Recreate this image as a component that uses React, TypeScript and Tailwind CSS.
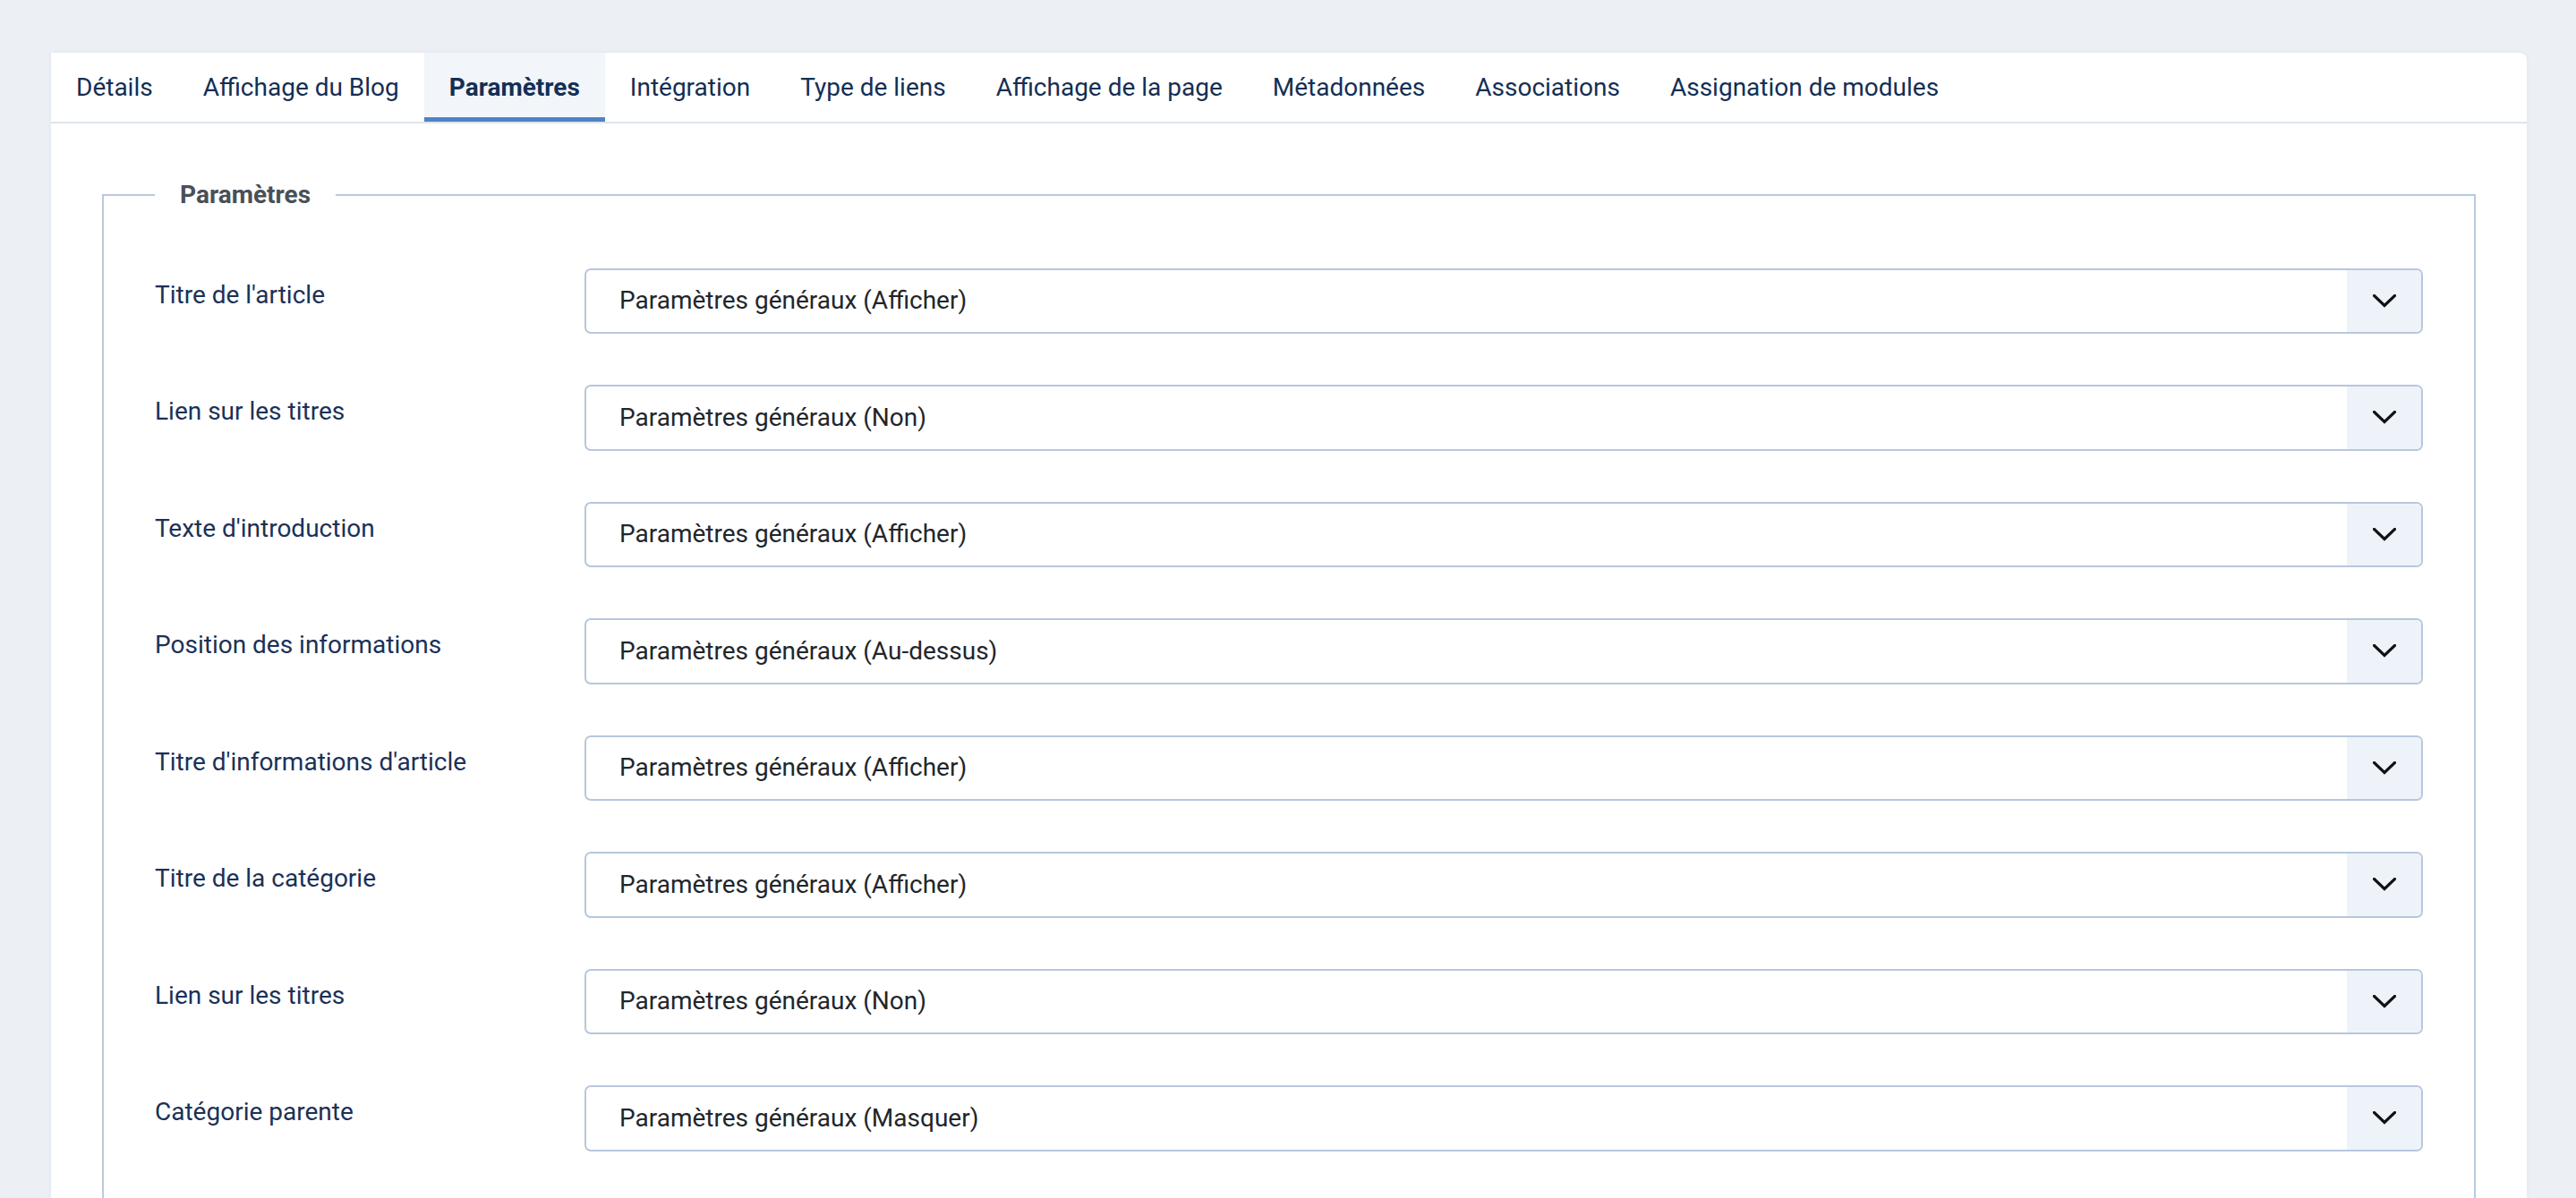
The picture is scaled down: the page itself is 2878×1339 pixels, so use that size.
const tabs = [
  "Détails",
  "Affichage du Blog",
  "Paramètres",
  "Intégration",
  "Type de liens",
  "Affichage de la page",
  "Métadonnées",
  "Associations",
  "Assignation de modules",
];

const rows = [
  { label: "Titre de l'article", value: "Paramètres généraux (Afficher)" },
  { label: "Lien sur les titres", value: "Paramètres généraux (Non)" },
  { label: "Texte d'introduction", value: "Paramètres généraux (Afficher)" },
  { label: "Position des informations", value: "Paramètres généraux (Au-dessus)" },
  { label: "Titre d'informations d'article", value: "Paramètres généraux (Afficher)" },
  { label: "Titre de la catégorie", value: "Paramètres généraux (Afficher)" },
  { label: "Lien sur les titres", value: "Paramètres généraux (Non)" },
  { label: "Catégorie parente", value: "Paramètres généraux (Masquer)" },
];

function Chevron() {
  return (
    <svg width="26" height="15" viewBox="0 0 26 15" fill="none">
      <polyline
        points="1.5,1.5 13,12.5 24.5,1.5"
        stroke="#111"
        strokeWidth="3.2"
        strokeLinecap="square"
      />
    </svg>
  );
}

function SelectBox({ value }: { value: string }) {
  return (
    <div className="flex h-[73.5px] flex-1 items-stretch rounded-[7px] border-2 border-[#b7c7dd] bg-white">
      <div className="flex flex-1 items-center pl-[37px] text-[28px] leading-[42px] text-[#22262a]">
        {value}
      </div>
      <div className="flex w-[83px] items-center justify-center rounded-r-[5px] bg-[#eef3fa]">
        <Chevron />
      </div>
    </div>
  );
}

export default function App() {
  return (
    <div className="min-h-screen bg-[#ecf0f5] pl-[57px] pr-[55px] pt-[59px] font-[Roboto,sans-serif]">
      <div className="rounded-tr-[8px] bg-white shadow-[0_0_6px_rgba(30,60,110,0.05)]">
        <div className="flex border-b-2 border-[#dde4ee]">
          {tabs.map((t) => {
            const active = t === "Paramètres";
            return (
              <div
                key={t}
                className={
                  active
                    ? "border-b-[5px] border-[#4f84c4] bg-[#f2f6fa] px-[28px] pb-[12.5px] pt-[17.5px] text-[28px] font-bold leading-[42px] text-[#132f55]"
                    : "border-b-[5px] border-transparent px-[28px] pb-[12.5px] pt-[17.5px] text-[28px] leading-[42px] text-[#132f55]"
                }
              >
                {t}
              </div>
            );
          })}
        </div>
        <div className="px-[57px] pb-[60px] pt-[59px]">
          <fieldset className="border-2 border-[#b9c9de] px-[57px] pb-[60px] pt-[60.5px]">
            <legend className="px-[28px] text-[28px] font-bold leading-[42px] text-[#495057]">
              Paramètres
            </legend>
            <div className="flex flex-col gap-[57px]">
              {rows.map((r, i) => (
                <div key={i} className="flex items-start">
                  <div className="w-[480px] pt-[9px] text-[28px] leading-[42px] text-[#1b3157]">
                    {r.label}
                  </div>
                  <SelectBox value={r.value} />
                </div>
              ))}
            </div>
          </fieldset>
        </div>
      </div>
    </div>
  );
}
